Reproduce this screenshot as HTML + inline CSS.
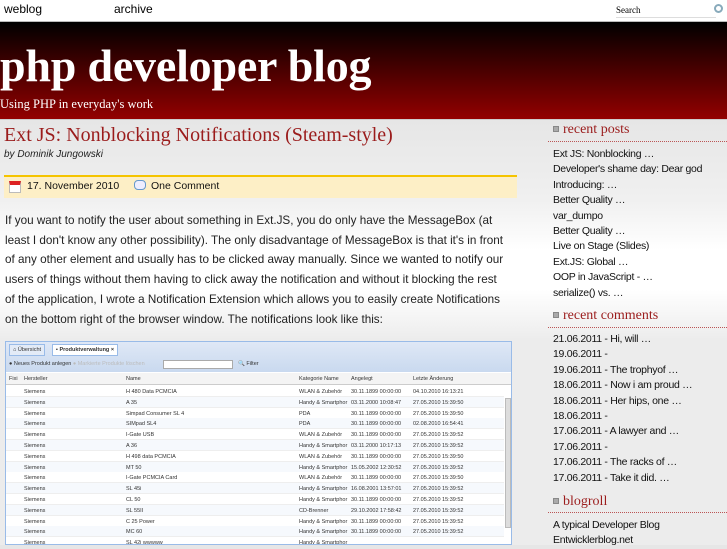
<!DOCTYPE html><html><head><style>
*{margin:0;padding:0;box-sizing:border-box}
body{width:727px;height:545px;overflow:hidden;font-family:"Liberation Sans",sans-serif;background:linear-gradient(#e6e6e6 120px,#f0f0f0 200px,#fff 250px,#fff 290px,#ececec 340px,#ececec);position:relative}
.a{position:absolute;white-space:nowrap}
.top{position:absolute;left:0;top:0;width:727px;height:22px;background:#fff;border-bottom:1px solid #bbb}
.hdr{position:absolute;left:0;top:22px;width:727px;height:98px;background:linear-gradient(#000,#930000);border-bottom:1px solid #ccc}
.side{font-size:10.5px;color:#111;letter-spacing:-.3px}
.sh{font-family:"Liberation Serif",serif;color:#9b1c1c;font-size:14px}
.dot{border-bottom:1px dotted #b55;position:absolute;left:548px;width:179px}
.bx{display:inline-block;width:6px;height:6px;background:#aaa;border:1px solid #888;margin-right:4px;vertical-align:1px}
p.t{position:absolute;left:5px;top:211px;font-size:11.7px;line-height:19.7px;color:#222;white-space:nowrap;letter-spacing:0}
.ss{position:absolute;left:5px;top:341px;width:507px;height:204px;background:#fff;border:1px solid #99bbe8;font-size:5.5px;color:#333;overflow:hidden}
.row{position:absolute;left:0;width:498px;height:11px;border-bottom:1px solid #eee}
.row span,.hd span{position:absolute;top:3px}
</style></head><body>
<div class="top"></div>
<div class="a" style="left:4px;top:2px;font-size:12px">weblog</div>
<div class="a" style="left:114px;top:2px;font-size:12px">archive</div>
<div class="a" style="left:616px;top:5px;font-size:9px;font-family:'Liberation Serif',serif;width:100px;border-bottom:1px solid #ddd;padding-bottom:2px">Search</div>
<div class="a" style="left:714px;top:4px;width:9px;height:9px;border-radius:50%;border:2px solid #8ab"></div>
<div class="hdr"></div>
<div class="a" style="left:0;top:39px;font-family:'Liberation Serif',serif;font-weight:bold;font-size:46px;color:#fff;letter-spacing:-.2px">php developer blog</div>
<div class="a" style="left:0;top:97px;font-family:'Liberation Serif',serif;font-size:12.5px;color:#fff">Using PHP in everyday's work</div>
<div class="a" style="left:4px;top:124px;font-family:'Liberation Serif',serif;font-size:20px;color:#9b1c1c">Ext JS: Nonblocking Notifications (Steam-style)</div>
<div class="a" style="left:4px;top:149px;font-size:10px;font-style:italic;color:#222">by Dominik Jungowski</div>
<div class="a" style="left:4px;top:175px;width:513px;height:23px;background:#fdefc6;border-top:2px solid #f5c400"></div>
<div class="a" style="left:9px;top:181px;width:12px;height:12px;background:#fff;border:1px solid #bbb;border-top:4px solid #d22"></div>
<div class="a" style="left:27px;top:180px;font-size:10.5px;color:#111">17. November 2010</div>
<div class="a" style="left:134px;top:180px;width:12px;height:10px;border:1px solid #69c;border-radius:4px;background:#eef"></div>
<div class="a" style="left:151px;top:180px;font-size:10.5px;color:#111">One Comment</div>
<p class="t">If you want to notify the user about something in Ext.JS, you do only have the MessageBox (at<br>least I don't know any other possibility). The only disadvantage of MessageBox is that it's in front<br>of any other element and usually has to be clicked away manually. Since we wanted to notify our<br>users of things without them having to click away the notification and without it blocking the rest<br>of the application, I wrote a Notification Extension which allows you to easily create Notifications<br>on the bottom right of the browser window. The notifications look like this:</p>
<div class="ss">
<div style="position:absolute;left:0;top:0;width:507px;height:30px;background:linear-gradient(#dfe8f6,#c9d9ef)"></div>
<div class="a" style="left:3px;top:2px;padding:2px 3px;background:#e3ebf7;border:1px solid #99bbe8">⌂ Übersicht</div>
<div class="a" style="left:46px;top:2px;padding:2px 3px;background:#fff;border:1px solid #99bbe8;font-weight:bold">▪ Produktverwaltung ×</div>
<div class="a" style="left:3px;top:19px;color:#333">● Neues Produkt anlegen <span style="color:#bbb">● Markierte Produkte löschen</span></div>
<div class="a" style="left:157px;top:18px;width:70px;height:9px;background:#fff;border:1px solid #aaa"></div>
<div class="a" style="left:232px;top:19px">🔍 Filter</div>
<div class="hd" style="position:absolute;left:0;top:31px;width:507px;height:12px;background:#f4f4f4;border-bottom:1px solid #ccc">
<span style="left:3px">Fixi</span><span style="left:18px">Hersteller</span><span style="left:120px">Name</span><span style="left:293px">Kategorie Name</span><span style="left:345px">Angelegt</span><span style="left:407px">Letzte Änderung</span></div>
<div style="position:absolute;left:499px;top:56px;width:6px;height:130px;background:#ddd;border:1px solid #bbb"></div>
</div>
<script>
var d=[["H 480 Data PCMCIA","WLAN & Zubehör","30.11.1899 00:00:00","04.10.2010 16:13:21"],["A 35","Handy & Smartphor","03.11.2000 10:08:47","27.05.2010 15:39:50"],["Simpad Consumer SL 4","PDA","30.11.1899 00:00:00","27.05.2010 15:39:50"],["SIMpad SL4","PDA","30.11.1899 00:00:00","02.08.2010 16:54:41"],["I-Gate USB","WLAN & Zubehör","30.11.1899 00:00:00","27.05.2010 15:39:52"],["A 36","Handy & Smartphor","03.11.2000 10:17:13","27.05.2010 15:39:52"],["H 498 data PCMCIA","WLAN & Zubehör","30.11.1899 00:00:00","27.05.2010 15:39:50"],["MT 50","Handy & Smartphor","15.05.2002 12:30:52","27.05.2010 15:39:52"],["I-Gate PCMCIA Card","WLAN & Zubehör","30.11.1899 00:00:00","27.05.2010 15:39:50"],["SL 45i","Handy & Smartphor","16.08.2001 13:57:01","27.05.2010 15:39:52"],["CL 50","Handy & Smartphor","30.11.1899 00:00:00","27.05.2010 15:39:52"],["SL 55II","CD-Brenner","29.10.2002 17:58:42","27.05.2010 15:39:52"],["C 25 Power","Handy & Smartphor","30.11.1899 00:00:00","27.05.2010 15:39:52"],["MC 60","Handy & Smartphor","30.11.1899 00:00:00","27.05.2010 15:39:52"],["SL 42i wwwww","Handy & Smartphor","",""]];
var h="";d.forEach(function(r,i){h+='<div class="row" style="top:'+(44+i*10.8)+'px;background:'+(i%2?'#f6f9fd':'#fff')+'"><span style="left:18px">Siemens</span><span style="left:120px">'+r[0]+'</span><span style="left:293px">'+r[1]+'</span><span style="left:345px">'+r[2]+'</span><span style="left:407px">'+r[3]+'</span></div>'});
document.querySelector('.ss').insertAdjacentHTML('beforeend',h);
</script>
<div class="a sh" style="left:553px;top:122px"><span class="bx"></span>recent posts</div>
<div class="dot" style="top:141px"></div>
<div class="a side" style="left:553px;top:147px;line-height:15.4px">Ext JS: Nonblocking …<br>Developer's shame day: Dear god<br>Introducing: …<br>Better Quality …<br>var_dumpo<br>Better Quality …<br>Live on Stage (Slides)<br>Ext.JS: Global …<br>OOP in JavaScript - …<br>serialize() vs. …</div>
<div class="a sh" style="left:553px;top:308px"><span class="bx"></span>recent comments</div>
<div class="dot" style="top:327px"></div>
<div class="a side" style="left:553px;top:332px;line-height:15.4px">21.06.2011 - Hi, will …<br>19.06.2011 -<br>19.06.2011 - The trophyof …<br>18.06.2011 - Now i am proud …<br>18.06.2011 - Her hips, one …<br>18.06.2011 -<br>17.06.2011 - A lawyer and …<br>17.06.2011 -<br>17.06.2011 - The racks of …<br>17.06.2011 - Take it did. …</div>
<div class="a sh" style="left:553px;top:494px"><span class="bx"></span>blogroll</div>
<div class="dot" style="top:512px"></div>
<div class="a side" style="left:553px;top:518px;line-height:15.4px">A typical Developer Blog<br>Entwicklerblog.net</div>
</body></html>
